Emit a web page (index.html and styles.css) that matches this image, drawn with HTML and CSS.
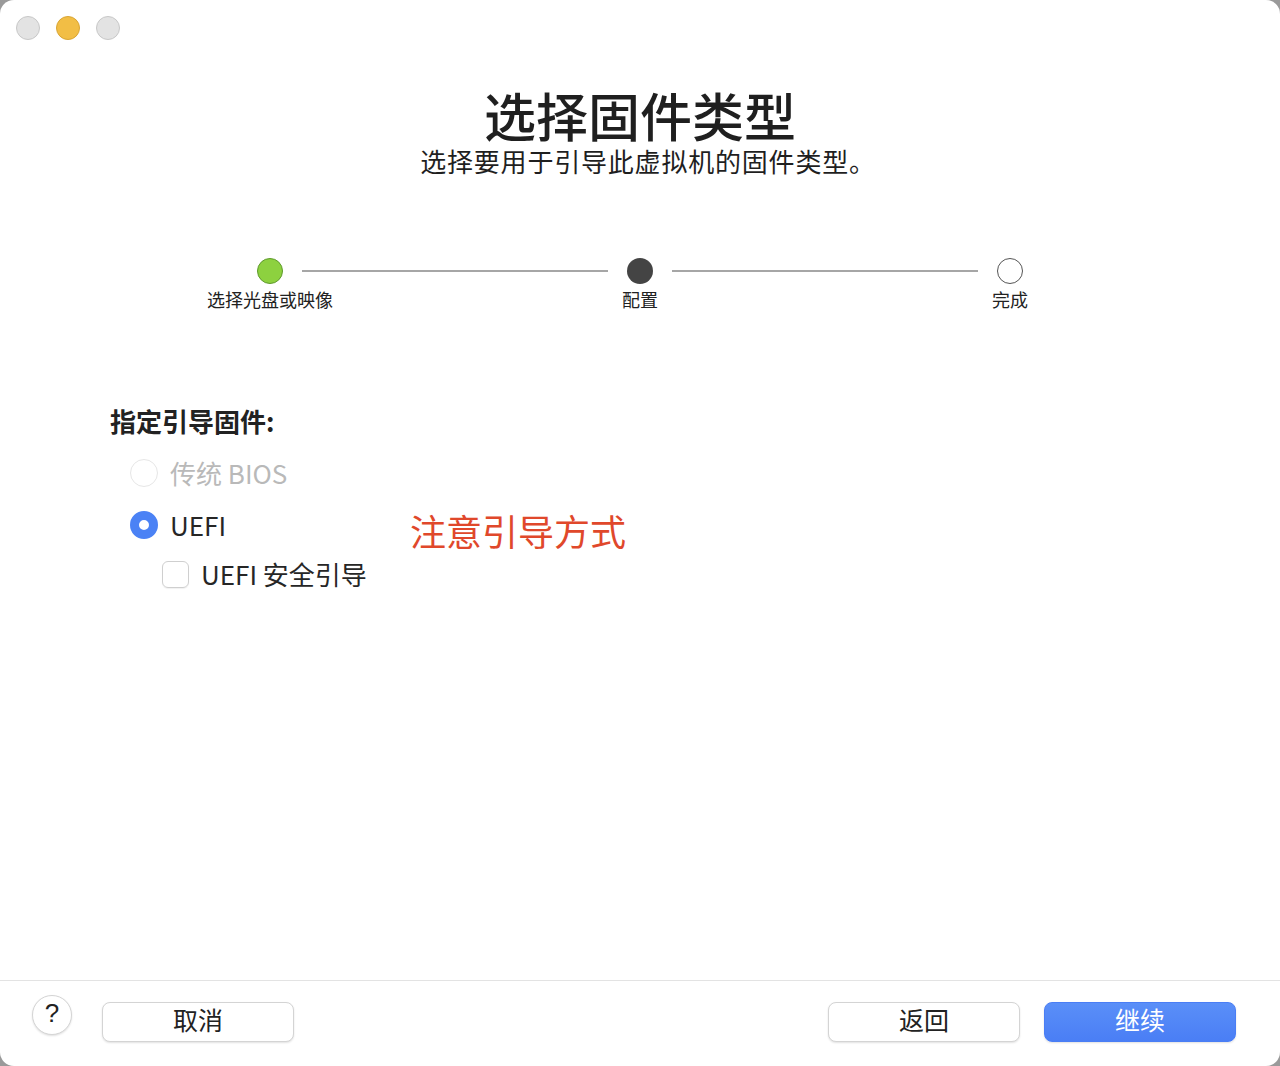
FILE: index.html
```html
<!DOCTYPE html>
<html lang="zh-CN">
<head>
    <meta charset="utf-8">
    <title>选择固件类型</title>
    <link rel="stylesheet" href="styles.css">
</head>
<body>
    <div class="window">
        <div class="titlebar">
            <span class="light gray"></span>
            <span class="light yellow"></span>
            <span class="light gray"></span>
        </div>

        <div class="header">
            <h1>选择固件类型</h1>
            <p class="subtitle">选择要用于引导此虚拟机的固件类型。</p>
        </div>

        <div class="steps">
            <div class="step">
                <span class="dot done"></span>
                <span class="step-label">选择光盘或映像</span>
            </div>
            <div class="line first"></div>
            <div class="step">
                <span class="dot current"></span>
                <span class="step-label">配置</span>
            </div>
            <div class="line second"></div>
            <div class="step">
                <span class="dot todo"></span>
                <span class="step-label">完成</span>
            </div>
        </div>

        <div class="content">
            <div class="options">
                <div class="section-title">指定引导固件:</div>
                <div class="option disabled">
                    <span class="radio"></span>
                    <span>传统 BIOS</span>
                </div>
                <div class="option">
                    <span class="radio checked"></span>
                    <span>UEFI</span>
                </div>
                <div class="option sub">
                    <span class="checkbox"></span>
                    <span>UEFI 安全引导</span>
                </div>
            </div>
            <div class="note">注意引导方式</div>
        </div>

        <div class="footer">
            <button class="help">?</button>
            <button class="btn">取消</button>
            <div class="spacer"></div>
            <button class="btn">返回</button>
            <button class="btn primary">继续</button>
        </div>
    </div>
</body>
</html>
```

FILE: styles.css
```css
* {
    box-sizing: border-box;
}

body {
    margin: 0;
    width: 1280px;
    height: 1066px;
    background: #9a9a9a;
    font-family: "Noto Sans CJK SC", "Noto Sans", sans-serif;
    color: #262626;
}

.window {
    width: 1280px;
    height: 1066px;
    background: #fff;
    border-radius: 14px;
    display: flex;
    flex-direction: column;
    overflow: hidden;
}

.titlebar {
    display: flex;
    gap: 16px;
    padding: 16px 0 0 16px;
    height: 40px;
}

.light {
    width: 24px;
    height: 24px;
    border-radius: 50%;
    border: 1px solid #c8c8c8;
    background: #e3e3e3;
}

.light.yellow {
    background: #f2be45;
    border-color: #d9a534;
}

.header {
    text-align: center;
    margin-top: 47px;
}

h1 {
    margin: 0;
    font-size: 52px;
    font-weight: 500;
    line-height: 56px;
    color: #1f1f1f;
}

.subtitle {
    margin: 0;
    padding-left: 16px;
    font-size: 26px;
    line-height: 36px;
    letter-spacing: 0.8px;
    color: #1f1f1f;
}

.steps {
    display: grid;
    grid-template-columns: 140px 1fr 80px 1fr 140px;
    margin: 79px 0 0 200px;
    width: 880px;
}

.step {
    display: flex;
    flex-direction: column;
    align-items: center;
}

.dot {
    width: 26px;
    height: 26px;
    border-radius: 50%;
}

.dot.done {
    background: #8dd13f;
    border: 1px solid #5e9a2b;
}

.dot.current {
    background: #444;
}

.dot.todo {
    background: #fff;
    border: 1px solid #555;
}

.step-label {
    font-size: 18px;
    line-height: 24px;
    margin-top: 3px;
    color: #222;
}

.line {
    height: 2px;
    background: #a6a6a6;
    margin-top: 12px;
}

.line.first {
    margin-left: -38px;
    margin-right: -8px;
}

.line.second {
    margin-left: -8px;
    margin-right: -38px;
}

.content {
    display: flex;
    align-items: flex-start;
    padding: 93px 0 0 110px;
}

.options {
    width: 300px;
}

.section-title {
    font-size: 26px;
    font-weight: 700;
    line-height: 34px;
    color: #222;
    margin-bottom: 18px;
}

.option {
    display: flex;
    align-items: center;
    gap: 12px;
    font-size: 26px;
    line-height: 34px;
    margin-bottom: 18px;
    padding-left: 20px;
}

.option.disabled {
    color: #b9b9b9;
}

.option.sub {
    padding-left: 52px;
    margin-top: -3px;
}

.radio {
    width: 28px;
    height: 28px;
    border-radius: 50%;
    border: 1px solid #dadada;
    background: #fff;
    flex-shrink: 0;
}

.option.disabled .radio {
    border-color: #e6e6e6;
}

.radio.checked {
    border: 9px solid #4b82f5;
    background: #fff;
}

.checkbox {
    width: 27px;
    height: 27px;
    border-radius: 6px;
    border: 1px solid #cfcfcf;
    box-shadow: 0 1px 1px rgba(0, 0, 0, 0.06);
    flex-shrink: 0;
}

.note {
    color: #e0482b;
    font-size: 36px;
    line-height: 48px;
    margin-top: 102px;
}

.footer {
    margin-top: auto;
    border-top: 1px solid #e3e3e3;
    height: 86px;
    display: flex;
    align-items: flex-start;
    padding: 14px 44px 0 32px;
    gap: 24px;
}

.spacer {
    flex: 1;
}

.help {
    width: 40px;
    height: 40px;
    border-radius: 50%;
    border: 1px solid #d4d4d4;
    background: #fff;
    box-shadow: 0 1px 2px rgba(0, 0, 0, 0.12);
    font-family: "Liberation Sans", sans-serif;
    font-size: 26px;
    color: #222;
    padding: 0 0 4px;
    margin-right: 6px;
}

.btn {
    width: 192px;
    height: 40px;
    margin-top: 7px;
    border-radius: 8px;
    border: 1px solid #d4d4d4;
    background: #fff;
    box-shadow: 0 1px 2px rgba(0, 0, 0, 0.12);
    font-family: "Noto Sans CJK SC", sans-serif;
    font-size: 25px;
    color: #222;
    padding: 0 0 6px;
    line-height: 32px;
}

.btn.primary {
    background: linear-gradient(#5a8ff8, #4a7ef5);
    border-color: #4a7ef5;
    color: #fff;
}
```
